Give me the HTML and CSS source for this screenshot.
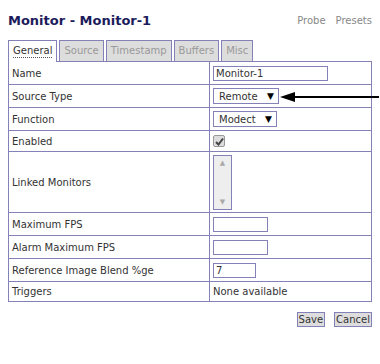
FILE: index.html
```html
<!DOCTYPE html>
<html lang="en">
<head>
  <meta charset="UTF-8" />
  <title>Monitor - Monitor-1</title>
  <link rel="stylesheet" href="styles.css">
</head>
<body>
  <div class="page">
    <div class="header">
      <h2>Monitor - Monitor-1</h2>
      <div class="links">
        <a href="#">Probe</a>
        <a href="#">Presets</a>
      </div>
    </div>

    <ul class="tabs">
      <li class="active"><span>General</span></li>
      <li>Source</li>
      <li>Timestamp</li>
      <li>Buffers</li>
      <li>Misc</li>
    </ul>

    <table class="form">
      <tr>
        <td class="label">Name</td>
        <td><input type="text" class="txt w-name" value="Monitor-1"></td>
      </tr>
      <tr>
        <td class="label">Source Type</td>
        <td class="pointer-cell">
          <span class="sel w-remote">Remote <b>&#9660;</b></span>
          <svg class="pointer" width="100" height="12" viewBox="0 0 100 12">
            <line x1="12" y1="6" x2="99" y2="6" stroke="#000" stroke-width="2"/>
            <polygon points="0,6 15,1 15,11" fill="#000"/>
          </svg>
        </td>
      </tr>
      <tr>
        <td class="label">Function</td>
        <td><span class="sel w-modect">Modect <b>&#9660;</b></span></td>
      </tr>
      <tr class="short">
        <td class="label">Enabled</td>
        <td>
          <span class="check">
            <svg width="9" height="9" viewBox="0 0 9 9"><path d="M1 5 L3.5 7.5 L8 1.5" fill="none" stroke="#444" stroke-width="2"/></svg>
          </span>
        </td>
      </tr>
      <tr class="tall">
        <td class="label">Linked Monitors</td>
        <td>
          <span class="listbox">
            <i>&#9650;</i>
            <i>&#9660;</i>
          </span>
        </td>
      </tr>
      <tr>
        <td class="label">Maximum FPS</td>
        <td><input type="text" class="txt w-fps" value=""></td>
      </tr>
      <tr>
        <td class="label">Alarm Maximum FPS</td>
        <td><input type="text" class="txt w-fps" value=""></td>
      </tr>
      <tr>
        <td class="label">Reference Image Blend %ge</td>
        <td><input type="text" class="txt w-blend" value="7"></td>
      </tr>
      <tr class="last">
        <td class="label">Triggers</td>
        <td>None available</td>
      </tr>
    </table>

    <div class="actions">
      <button>Save</button>
      <button>Cancel</button>
    </div>
  </div>
</body>
</html>
```

FILE: styles.css
```css
* {
  box-sizing: border-box;
}

body {
  font-family: 'DejaVu Sans', Verdana, sans-serif;
  font-size: 10px;
  color: #333;
  background: #fff;
  margin: 0;
  padding: 0;
}

.page {
  padding: 0 8px 0 8px;
  width: 380px;
}

.header {
  display: flex;
  justify-content: space-between;
  align-items: center;
  height: 40px;
  padding-top: 1px;
}

h2 {
  margin: 0;
  font-size: 13px;
  font-weight: bold;
  color: #1c1c5c;
}

.links {
  display: flex;
  gap: 10px;
}

.links a {
  color: #888;
  text-decoration: none;
  font-size: 10px;
}

.tabs {
  list-style: none;
  margin: 0;
  padding: 0;
  display: flex;
  gap: 2px;
  height: 21px;
}

.tabs li {
  border: 1px solid #8480b8;
  border-bottom: none;
  background: #ddd;
  color: #999;
  padding: 4px 4px 0;
  height: 21px;
}

.tabs li.active {
  background: #fff;
  color: #333;
  height: 22px;
  position: relative;
  z-index: 1;
}

.tabs li.active span {
  border-bottom: 1px dotted #555;
  padding-bottom: 1px;
}

table.form {
  width: 364px;
  border-collapse: collapse;
  border: 1px solid #8480b8;
}

table.form td {
  border-top: 1px solid #8480b8;
  border-bottom: 1px solid #8480b8;
  padding: 0 3px;
  height: 23px;
  vertical-align: middle;
}

table.form td.label {
  width: 201px;
  border-right: 1px solid #8480b8;
}

table.form tr.short td {
  height: 21px;
}

table.form tr.tall td {
  height: 61px;
}

table.form tr.last td {
  height: 20px;
}

.txt {
  font-family: inherit;
  font-size: 10px;
  color: #333;
  border: 1px solid #8480b8;
  height: 15px;
  padding: 0 2px;
  margin: 0;
  display: block;
}

.w-name { width: 115px; }
.w-fps { width: 55px; }
.w-blend { width: 43px; }

.pointer-cell {
  position: relative;
}

.pointer {
  position: absolute;
  left: 70px;
  top: 6px;
}

.sel {
  display: inline-flex;
  align-items: center;
  border: 1px solid #8480b8;
  height: 16px;
  padding: 0 4px 0 5px;
  background: #fff;
  vertical-align: middle;
}

.sel b {
  font-size: 9px;
  color: #000;
  margin-left: auto;
}

.w-remote { width: 66px; }
.w-modect { width: 64px; }

.check {
  display: flex;
  align-items: center;
  justify-content: center;
  width: 12px;
  height: 12px;
  border: 1px solid #999;
  border-radius: 2px;
  background: #ddd;
}

.listbox {
  display: flex;
  flex-direction: column;
  justify-content: space-between;
  align-items: center;
  width: 19px;
  height: 55px;
  border: 1px solid #8480b8;
  background: #eee;
  padding: 3px 0;
}

.listbox i {
  font-style: normal;
  font-size: 7px;
  color: #aaa;
}

.actions {
  display: flex;
  justify-content: flex-end;
  gap: 9px;
  margin-top: 10px;
}

.actions button {
  font-family: inherit;
  font-size: 10px;
  color: #333;
  background: #ddd;
  border: 1px solid #8480b8;
  padding: 0 1px;
  height: 15px;
}
```
